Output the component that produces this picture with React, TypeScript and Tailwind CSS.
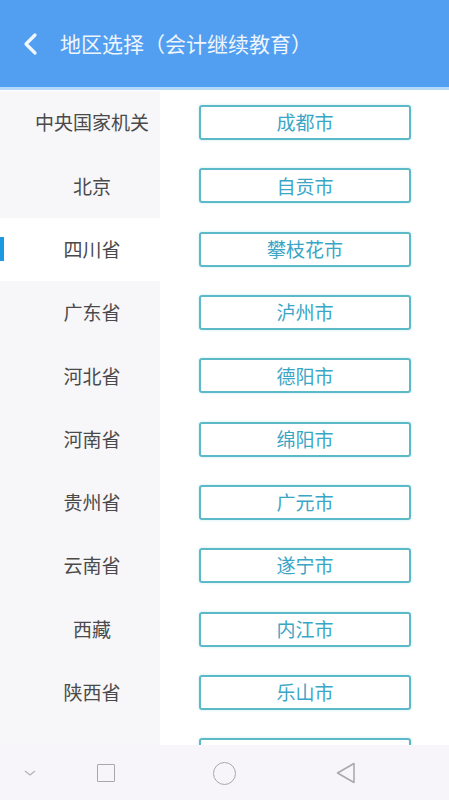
import React from 'react';

const provinces = ['中央国家机关', '北京', '四川省', '广东省', '河北省', '河南省', '贵州省', '云南省', '西藏', '陕西省'];
const cities = ['成都市', '自贡市', '攀枝花市', '泸州市', '德阳市', '绵阳市', '广元市', '遂宁市', '内江市', '乐山市', ''];

const font = { fontFamily: '"Noto Sans CJK SC", "Noto Sans", sans-serif' };

const App = () => {
    const selected = 2;
    return (
        <div className="w-[449px] h-[800px] flex flex-col bg-white overflow-hidden" style={font}>
            {/* Header */}
            <div className="h-[87px] shrink-0 bg-[#529ef1] flex items-center">
                <svg width="20" height="24" viewBox="0 0 20 24" className="ml-[21px]">
                    <path d="M14 3 L5 12 L14 21" fill="none" stroke="#f2f7fe" strokeWidth="3.2" strokeLinecap="round" strokeLinejoin="round" />
                </svg>
                <span className="ml-[19px] text-[21px] text-[#eef5fd]">地区选择（会计继续教育）</span>
            </div>
            <div className="h-[3px] shrink-0 bg-[#b4daf9]" />

            {/* Body */}
            <div className="flex-1 flex overflow-hidden pt-[1px]">
                <div className="w-[160px] shrink-0 bg-[#f7f6f9] flex flex-col">
                    {provinces.map((p, i) => (
                        <div
                            key={p}
                            className={
                                'h-[63.3px] shrink-0 relative flex items-center justify-center pl-[24px] text-[19px] text-[#4a4a4a] ' +
                                (i === selected ? 'bg-white' : '')
                            }
                        >
                            {i === selected && <div className="absolute left-0 top-[19px] w-[4px] h-[24px] bg-[#1d98e2]" />}
                            {p}
                        </div>
                    ))}
                </div>
                <div className="flex-1 flex flex-col">
                    {cities.map((c, i) => (
                        <div key={i} className="h-[63.3px] shrink-0 flex items-center pl-[39px]">
                            <div className="w-[212px] h-[35px] border-[2px] border-[#5cb9c8] rounded-[3px] flex items-center justify-center text-[19px] text-[#3aa6c6] shadow-[0_0_3px_rgba(92,185,200,0.35)]">
                                {c}
                            </div>
                        </div>
                    ))}
                </div>
            </div>

            {/* Android nav bar */}
            <div className="h-[55px] shrink-0 bg-[#f7f5f9] relative">
                <svg width="14" height="10" viewBox="0 0 14 10" className="absolute left-[23px] top-[23px]">
                    <path d="M2 3 L7 7 L12 3" fill="none" stroke="#b5b3b8" strokeWidth="1.3" />
                </svg>
                <div className="absolute left-[97px] top-[19px] w-[18px] h-[18px] border-[1.5px] border-[#a9a7ac] rounded-[1px]" />
                <div className="absolute left-[213px] top-[17px] w-[23px] h-[23px] border-[1.5px] border-[#a9a7ac] rounded-full" />
                <svg width="22" height="24" viewBox="0 0 22 24" className="absolute left-[335px] top-[16px]">
                    <path d="M19 2.5 L2.5 12 L19 21.5 Z" fill="none" stroke="#a9a7ac" strokeWidth="1.5" strokeLinejoin="round" />
                </svg>
            </div>
        </div>
    );
};

export default App;
